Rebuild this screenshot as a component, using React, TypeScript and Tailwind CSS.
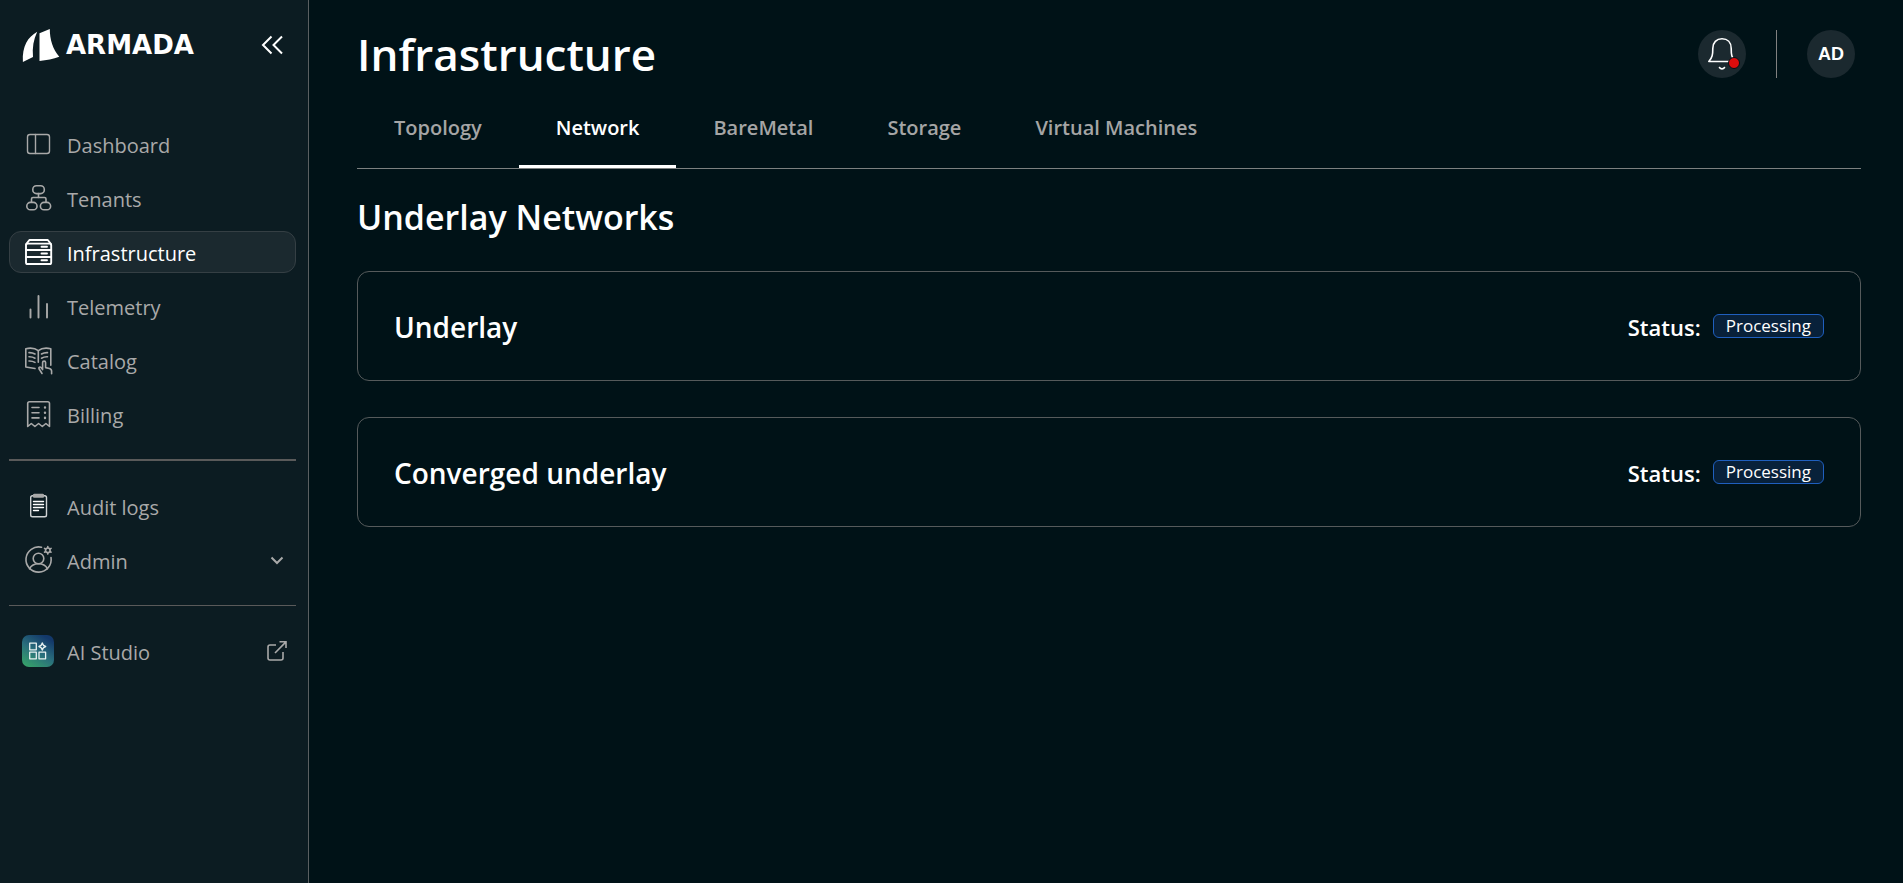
import type { ReactNode } from "react";
import clsx from "clsx";

type NavItemProps = {
    icon: ReactNode;
    label: string;
    active?: boolean;
    trailing?: ReactNode;
};

const Icon = ({ children, strokeWidth = 1.6 }: { children: ReactNode; strokeWidth?: number }) => (
    <svg
        className="size-8 shrink-0"
        viewBox="0 0 32 32"
        fill="none"
        stroke="currentColor"
        strokeWidth={strokeWidth}
        strokeLinecap="round"
        strokeLinejoin="round"
        aria-hidden="true"
    >
        {children}
    </svg>
);

const DashboardIcon = () => (
    <Icon strokeWidth={1.4}>
        <rect x="5.5" y="6.5" width="22" height="19" rx="2.5" />
        <path d="M13.5 6.5v19" />
    </Icon>
);

const TenantsIcon = () => (
    <Icon>
        <rect x="10.8" y="3.8" width="11.5" height="7.8" rx="3.6" />
        <rect x="4.8" y="20.4" width="10.2" height="7.4" rx="3.6" />
        <rect x="18.4" y="20.4" width="10.2" height="7.4" rx="3.6" />
        <path d="M16.5 11.6v4M9.5 20v-3a1.5 1.5 0 0 1 1.5-1.5h11.5a1.5 1.5 0 0 1 1.5 1.5v3" />
    </Icon>
);

const InfrastructureIcon = () => (
    <Icon strokeWidth={1.9}>
        <path d="M4.2 8.2 7.4 4h18.4l3.2 4.2" />
        <rect x="4" y="7.6" width="25.2" height="20.4" rx="1.6" />
        <path d="M4 14h25.2M4 21h25.2" />
        <path d="M19.5 10.8H25M19.5 17.5H25M19.5 24.3H25" />
    </Icon>
);

const TelemetryIcon = () => (
    <Icon strokeWidth={1.9}>
        <path d="M8.5 19.5v8M16.5 6v21.5M25 14v13.5" />
    </Icon>
);

const CatalogIcon = () => (
    <Icon>
        <path d="M13 24.5 3.8 23V4.7c4.5-1 9.2-.6 12.5 2 3.2-2.6 7.8-3 12.5-2v16.5" />
        <path d="M16.3 6.7v11.5" />
        <path d="M7 8.6c2.5-.1 4.3.4 6 1.4M7 12.8c2.5-.1 4.3.4 6 1.4M7 17c2.5-.1 4.3.4 6 1.4" />
        <path d="M25.5 8.6c-2.5-.1-4.3.4-6 1.4M25.5 12.8c-2.5-.1-4.3.4-6 1.4" />
        <path d="M20 29.5 17 24.8c-.6-1.5 1-2.4 2-1.2l1.6 2v-7c0-2 3-2 3 0v5l3.8.9c1.4.4 2.2 1.4 2.2 2.8v2.4" />
    </Icon>
);

const BillingIcon = () => (
    <Icon>
        <path d="M5.7 28.5V5.5a1.8 1.8 0 0 1 1.8-1.8h18.2a1.8 1.8 0 0 1 1.8 1.8v23l-3.6-3-3.6 3-3.7-3-3.7 3-3.6-3z" />
        <path d="M10 9.5h7M10 14.7h7M10 19.9h7" />
        <path d="M23 9.4v.2M23 14.6v.2M23 19.8v.2" strokeWidth="2.4" />
    </Icon>
);

const AuditLogsIcon = () => (
    <Icon strokeWidth={1.4}>
        <rect x="8.7" y="5.7" width="15.8" height="21" rx="1.8" className="text-[#d0d3d4]" />
        <rect x="11.5" y="4.5" width="10" height="2.6" rx=".8" fill="currentColor" />
        <path className="text-white" d="M11.5 11.5h10M11.5 14.5h10M11.5 17.5h10M11.5 20.5h5" />
    </Icon>
);

const AdminIcon = () => (
    <Icon>
        <path d="M19.5 3.300A12.600 12.600 0 1 0 29 13.500" />
        <circle cx="16.5" cy="14.5" r="5.3" />
        <path d="M7.5 24.8c1.7-3.2 5-5 9-5s7.3 1.8 9 5" />
        <circle cx="25.8" cy="6.3" r="2.3" />
        <path d="M25.8 2.5v1.3M25.8 8.800v1.300M22.500 4.400l1.200.7M27.900 7.500l1.200.7M22.500 8.200l1.200-.7M27.900 5.100l1.200-.7" />
    </Icon>
);

const StudioIcon = () => (
    <svg className="size-8 shrink-0" viewBox="0 0 32 32" fill="none" aria-hidden="true">
        <defs>
            <linearGradient id="studio-tile" x1="6" y1="32" x2="24" y2="2" gradientUnits="userSpaceOnUse">
                <stop stopColor="#36a06a" />
                <stop offset=".5" stopColor="#2a6f7c" />
                <stop offset="1" stopColor="#13386a" />
            </linearGradient>
        </defs>
        <rect width="32" height="32" rx="7" fill="url(#studio-tile)" />
        <g stroke="#e8f1f1" strokeWidth="1.3" strokeLinejoin="round">
            <rect x="7.7" y="8.2" width="6.6" height="6.6" />
            <rect x="7.7" y="17.2" width="6.6" height="6.6" />
            <rect x="17" y="17.2" width="6.6" height="6.6" />
            <path d="M20.3 8c.4 2 1.2 2.9 3.4 3.5-2.2.6-3 1.5-3.4 3.5-.4-2-1.2-2.900-3.400-3.500 2.200-.6 3-1.500 3.400-3.500z" />
        </g>
    </svg>
);

const ChevronDownIcon = () => (
    <svg className="size-6" viewBox="0 0 24 24" fill="none" stroke="currentColor" strokeWidth="2" aria-hidden="true">
        <path d="m6.5 9.5 5.5 5.5 5.5-5.5" />
    </svg>
);

const ExternalIcon = () => (
    <svg className="size-6" viewBox="0 0 24 24" fill="none" stroke="currentColor" strokeWidth="1.6" aria-hidden="true">
        <path d="M11 6H5a2 2 0 0 0-2 2v11a2 2 0 0 0 2 2h11a2 2 0 0 0 2-2v-6" />
        <path d="M14.500 2.800H21V9M20.700 3.100 10 14" />
    </svg>
);

const LogoMark = () => (
    <svg className="h-[33px] w-[38px]" viewBox="0 0 38 33" fill="#fff" aria-hidden="true">
        <path d="M15.2 2.800C6 8 0 17 .9 33L11 27.900C10.200 19 11.500 10.500 15.200 2.800z" />
        <path d="M17.5 4.200 27.800 0c0 10.500 3 20.500 9.500 27.700-6 2.200-12.700 3.600-19.800 4.200z" />
    </svg>
);

const BellIcon = () => (
    <svg className="size-8" viewBox="0 0 32 32" fill="none" stroke="#fff" strokeWidth="1.6" strokeLinecap="round" strokeLinejoin="round" aria-hidden="true">
        <path d="M2.8 23.5c3.6-4 4-7 4-13C6.8 4.5 10.5.8 16 .8s9.2 3.7 9.2 9.7c0 6 .4 9 4 13z" />
        <path d="M13.5 29.5c1.2 1.8 3.8 1.8 5 0" />
    </svg>
);

function NavItem({ icon, label, active, trailing }: NavItemProps) {
    return (
        <li>
            <a
                href="#"
                aria-current={active ? "page" : undefined}
                className={clsx(
                    "flex h-[42px] items-center gap-[13px] rounded-xl border pr-1.5 pl-3 text-xl",
                    active ? "border-[#353f44] bg-[#1b292f] text-white" : "border-transparent text-[#a9a9a9]"
                )}
            >
                {icon}
                <span className="flex-1 pt-1">{label}</span>
                {trailing}
            </a>
        </li>
    );
}

function Sidebar() {
    return (
        <aside className="w-[309px] shrink-0 border-r border-[#5a5f61] bg-[#0c1c22] pr-3 pl-[9px]">
            <div className="flex h-[90px] items-center justify-between pr-3 pl-[13px]">
                <a href="#" className="flex items-center gap-1.5 text-white">
                    <LogoMark />
                    <span className="font-['DejaVu_Sans',sans-serif] text-[26px] leading-8 font-bold">ARMADA</span>
                </a>
                <button type="button" aria-label="Collapse sidebar" className="text-white">
                    <svg className="size-6" viewBox="0 0 24 24" fill="none" stroke="currentColor" strokeWidth="2" aria-hidden="true">
                        <path d="m11.5 3.500-8.500 8.500 8.500 8.500M22 3.500 13.500 12l8.500 8.500" />
                    </svg>
                </button>
            </div>
            <nav className="pt-[33px]">
                <ul className="flex flex-col gap-3">
                    <NavItem icon={<DashboardIcon />} label="Dashboard" />
                    <NavItem icon={<TenantsIcon />} label="Tenants" />
                    <NavItem icon={<InfrastructureIcon />} label="Infrastructure" active />
                    <NavItem icon={<TelemetryIcon />} label="Telemetry" />
                    <NavItem icon={<CatalogIcon />} label="Catalog" />
                    <NavItem icon={<BillingIcon />} label="Billing" />
                </ul>
                <hr className="my-6 border-t-2 border-[#5a5a5a]" />
                <ul className="flex flex-col gap-3">
                    <NavItem icon={<AuditLogsIcon />} label="Audit logs" />
                    <NavItem icon={<AdminIcon />} label="Admin" trailing={<ChevronDownIcon />} />
                </ul>
                <hr className="my-6 border-[#5a5a5a]" />
                <ul>
                    <NavItem icon={<StudioIcon />} label="AI Studio" trailing={<ExternalIcon />} />
                </ul>
            </nav>
        </aside>
    );
}

const tabs = ["Topology", "Network", "BareMetal", "Storage", "Virtual Machines"];

const networks = [
    { name: "Underlay", status: "Processing" },
    { name: "Converged underlay", status: "Processing" },
];

export default function App() {
    return (
        <div className="flex min-h-screen bg-[#001217] font-['Open_Sans','Noto_Sans',sans-serif] text-white">
            <Sidebar />
            <main className="min-w-0 flex-1 pt-[30px] pr-[42px] pl-12">
                <header className="flex items-center justify-between pr-1.5">
                    <h1 className="text-[44px] leading-[48px] font-semibold">Infrastructure</h1>
                    <div className="flex items-center gap-[30px]">
                        <button type="button" aria-label="Notifications" className="relative flex size-12 items-center justify-center rounded-full bg-[#1b292f]">
                            <BellIcon />
                            <span className="absolute right-1.5 bottom-[9px] size-3 rounded-full border border-[#001217] bg-[#dc0d0d]" />
                        </button>
                        <div className="h-12 w-px bg-[#808080]" />
                        <button type="button" className="size-12 rounded-full bg-[#1b292f] font-['Liberation_Sans',sans-serif] text-lg font-bold">
                            AD
                        </button>
                    </div>
                </header>

                <div role="tablist" className="mt-6 flex border-b border-[#7c8080]">
                    {tabs.map((tab) => (
                        <button
                            key={tab}
                            type="button"
                            role="tab"
                            aria-selected={tab === "Network"}
                            className={clsx(
                                "h-[66px] border-b-[3px] px-[37px] pb-3 text-xl font-semibold whitespace-nowrap",
                                tab === "Network" ? "border-white text-white" : "border-transparent text-[#a5a5a5]"
                            )}
                        >
                            {tab}
                        </button>
                    ))}
                </div>

                <h2 className="mt-6 text-[34px] leading-[48px] font-semibold">Underlay Networks</h2>

                <div className="mt-[30px] flex flex-col gap-9">
                    {networks.map((network) => (
                        <section key={network.name} className="flex h-[110px] items-center justify-between rounded-xl border border-[#555a5b] px-9">
                            <h3 className="pt-0.5 text-[28px] leading-9 font-semibold">{network.name}</h3>
                            <div className="flex items-center gap-3">
                                <span className="pt-0.5 text-[22px] leading-9 font-semibold">Status:</span>
                                <span className="flex h-6 items-center rounded-md border border-[#1f5fbe] bg-[#08213a] px-3 text-[17px]">
                                    {network.status}
                                </span>
                            </div>
                        </section>
                    ))}
                </div>
            </main>
        </div>
    );
}
